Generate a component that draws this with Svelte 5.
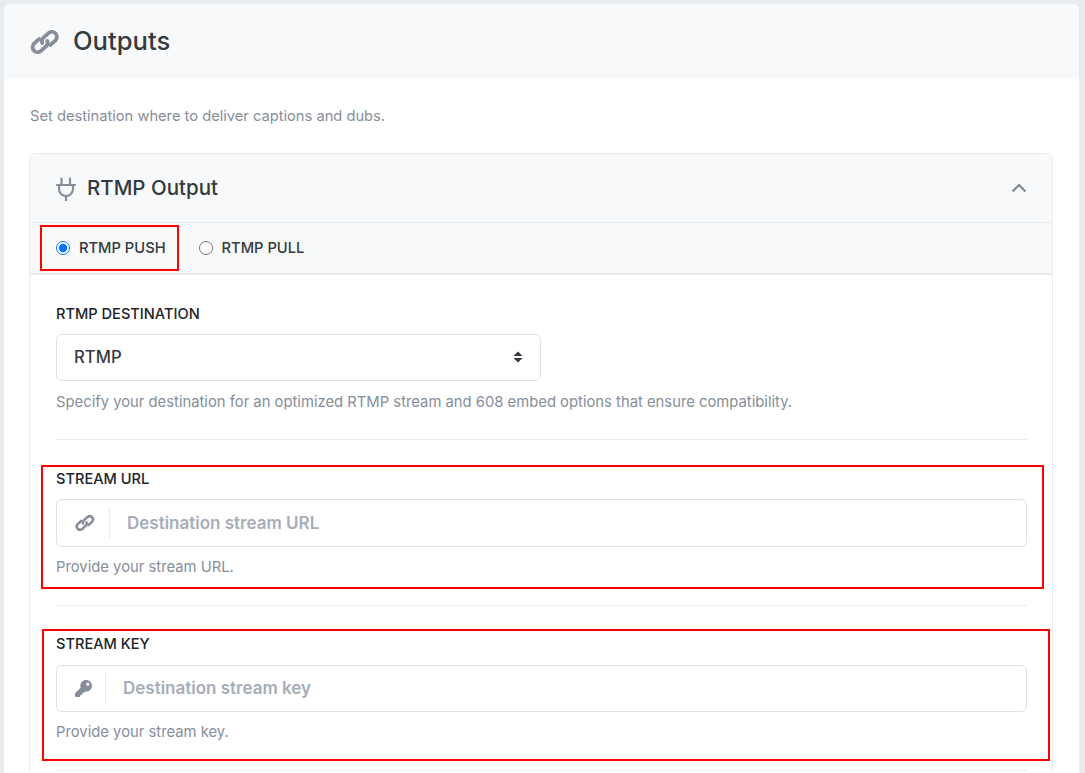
<script>
  const fields = [
    { id: 'url', label: 'STREAM URL', placeholder: 'Destination stream URL', help: 'Provide your stream URL.' },
    { id: 'key', label: 'STREAM KEY', placeholder: 'Destination stream key', help: 'Provide your stream key.' }
  ];
</script>

{#snippet link(cls)}
  <svg class={cls} viewBox="0 0 30 24" fill="none" stroke="currentColor" stroke-width="3.800" stroke-linecap="round">
    <path d="M9.25 8.95 4.05 13.65A5 5 0 0 0 10.75 21.05L15.95 16.35A5 5 0 0 0 17.3 11" />
    <path d="M20.25 15.05 25.45 10.35A5 5 0 0 0 18.75 2.95L13.55 7.65A5 5 0 0 0 12.2 13" />
  </svg>
{/snippet}

<div class="card">
  <header class="head">
    {@render link('head-icon')}
    <h1>Outputs</h1>
  </header>
  <div class="content">
    <p class="intro">Set destination where to deliver captions and dubs.</p>
    <section class="panel">
      <div class="panel-head">
        <svg class="plug" viewBox="0 0 20 25" fill="none" stroke="currentColor" stroke-width="2.2" stroke-linecap="round">
          <path d="M5.5 2.500v6.500M14 2.500v6.500" />
          <path d="M1 9h18" />
          <path d="M3 9v4a7 7 0 0 0 14 0V9" />
          <path d="M10 20v4.500" />
        </svg>
        <h2>RTMP Output</h2>
        <svg class="chev" viewBox="0 0 16 10" fill="none" stroke="currentColor" stroke-width="2"><path d="M1.500 8.500 8 2l6.500 6.500" /></svg>
      </div>
      <div class="tabs">
        <label class="radio boxed"><input type="radio" name="mode" checked /><span>RTMP PUSH</span></label>
        <label class="radio"><input type="radio" name="mode" /><span>RTMP PULL</span></label>
      </div>
      <div class="body">
        <div class="group first">
          <div class="label">RTMP DESTINATION</div>
          <div class="select"><span>RTMP</span>
            <svg viewBox="0 0 10 12" fill="currentColor"><path d="M5 0.500 9.500 5h-9zM5 11.500.5 7h9z" /></svg>
          </div>
          <p class="help">Specify your destination for an optimized RTMP stream and 608 embed options that ensure compatibility.</p>
        </div>
        {#each fields as f}
          <div class="group {f.id}">
            <div class="frame"></div>
            <div class="label">{f.label}</div>
            <div class="field">
              <span class="addon">
                {#if f.id === 'url'}
                  {@render link('field-icon')}
                {:else}
                  <svg class="field-icon keyicon" viewBox="0 0 512 512" fill="currentColor"><path d="M512 176.001C512 273.203 433.202 352 336 352c-11.22 0-22.19-1.062-32.827-3.069l-24.012 27.014A23.999 23.999 0 0 1 261.223 384H224v40c0 13.255-10.745 24-24 24h-40v40c0 13.255-10.745 24-24 24H24c-13.255 0-24-10.745-24-24v-78.059c0-6.365 2.529-12.47 7.029-16.971l161.802-161.802C163.108 213.814 160 195.271 160 176 160 78.798 238.797.001 335.999 0 433.488-.001 512 78.511 512 176.001zM336 128c0 26.51 21.49 48 48 48s48-21.49 48-48-21.49-48-48-48-48 21.49-48 48z" /></svg>
                {/if}
              </span>
              <input type="text" placeholder={f.placeholder} />
            </div>
            <p class="help">{f.help}</p>
          </div>
        {/each}
      </div>
    </section>
  </div>
</div>

<style>
  :global(body) {
    margin: 0;
    background: #e9ecef;
    font-family: Inter, "Liberation Sans", sans-serif;
    height: 773px;
    overflow: hidden;
  }
  .card {
    margin: 4px 6px 0 4px;
    background: #fff;
    border-radius: 6px 6px 0 0;
    height: 769px;
    overflow: hidden;
  }
  .head {
    height: 75px;
    background: #f8f9fa;
    display: flex;
    align-items: center;
    padding-left: 26px;
    gap: 13px;
    box-sizing: border-box;
  }
  .head-icon {
    width: 30px;
    height: 24px;
    color: #868e9b;
  }
  h1 {
    margin: 0 0 2px;
    font-size: 25.6px;
    line-height: 30px;
    font-weight: 500;
    color: #343a40;
  }
  .content {
    padding: 27px 26px 0 25px;
  }
  .intro {
    margin: 0 0 26px 1px;
    font-size: 14.68px;
    line-height: 21px;
    color: #868e9b;
  }
  .panel {
    border: 1px solid #e9ecef;
    border-bottom: 0;
    border-radius: 6px 6px 0 0;
  }
  .panel-head {
    height: 68px;
    background: #f8f9fa;
    border-radius: 6px 6px 0 0;
    display: flex;
    align-items: center;
    padding: 0 25px 0 26px;
    gap: 11px;
    border-bottom: 1px solid #e9ecef;
  }
  .plug {
    width: 20px;
    height: 25px;
    color: #868e9b;
  }
  h2 {
    margin: 0;
    flex: 1;
    font-size: 20.5px;
    line-height: 26px;
    font-weight: 500;
    color: #343a40;
  }
  .chev {
    width: 16px;
    height: 10px;
    color: #7f8796;
  }
  .tabs {
    height: 50px;
    background: #f8f9fa;
    border-bottom: 2px solid #e9ecef;
    display: flex;
    align-items: center;
    padding-left: 26px;
    gap: 33px;
  }
  .radio {
    display: flex;
    align-items: center;
    gap: 9px;
    font-size: 14.7px;
    line-height: 20px;
    font-weight: 500;
    color: #343a40;
    position: relative;
  }
  .radio input {
    margin: 0;
    width: 14px;
    height: 14px;
    accent-color: #0075ff;
  }
  .boxed::after {
    content: "";
    position: absolute;
    left: -16px;
    top: -13px;
    width: 135px;
    height: 42px;
    border: 2px solid #f00;
    pointer-events: none;
  }
  .body {
    padding: 0 25px 0 26px;
  }
  .group {
    position: relative;
    border-bottom: 1px solid #e9ecef;
    box-sizing: border-box;
  }
  .first {
    padding-top: 29px;
    height: 165px;
  }
  .url {
    padding-top: 29px;
    height: 166px;
  }
  .key {
    padding-top: 28px;
    height: 165px;
  }
  .label {
    font-size: 14.6px;
    line-height: 20px;
    font-weight: 500;
    color: #212529;
    margin-bottom: 10px;
  }
  .key .label {
    margin-bottom: 11px;
  }
  .select {
    width: 485px;
    height: 47px;
    box-sizing: border-box;
    border: 1px solid #dee2e6;
    border-radius: 6px;
    display: flex;
    align-items: center;
    justify-content: space-between;
    padding: 0 17px 1px;
    font-size: 16.7px;
    font-weight: 500;
    color: #343a40;
  }
  .select svg {
    width: 10px;
    height: 12px;
    color: #343a40;
  }
  .help {
    margin: 10px 0 0;
    font-size: 14.8px;
    line-height: 21px;
    color: #868e9b;
  }
  .first .help {
    margin-top: 11px;
  }
  .field {
    height: 48px;
    box-sizing: border-box;
    border: 1px solid #dee2e6;
    border-radius: 6px;
    display: flex;
    align-items: center;
  }
  .key .field {
    height: 47px;
  }
  .addon {
    height: 32px;
    width: 53px;
    box-sizing: border-box;
    border-right: 1px solid #e9ecef;
    display: flex;
    align-items: center;
    justify-content: center;
    padding-left: 4px;
  }
  .key .addon {
    width: 49px;
  }
  .field-icon {
    width: 20px;
    height: 16px;
    color: #868e9b;
  }
  .field-icon.keyicon {
    width: 17px;
    height: 17px;
  }
  .field input {
    flex: 1;
    min-width: 0;
    border: 0;
    outline: 0;
    background: transparent;
    padding: 0 0 0 17px;
    font: 600 17px Inter, "Liberation Sans", sans-serif;
    color: #343a40;
  }
  .key .field input {
    padding-bottom: 2px;
  }
  .field input::placeholder {
    color: #a6adb9;
    opacity: 1;
  }
  .frame {
    position: absolute;
    border: 2px solid #f00;
    pointer-events: none;
  }
  .url .frame {
    left: -15px;
    top: 25px;
    width: 999px;
    height: 120px;
  }
  .key .frame {
    left: -14px;
    top: 23px;
    width: 1004px;
    height: 128px;
  }
</style>
